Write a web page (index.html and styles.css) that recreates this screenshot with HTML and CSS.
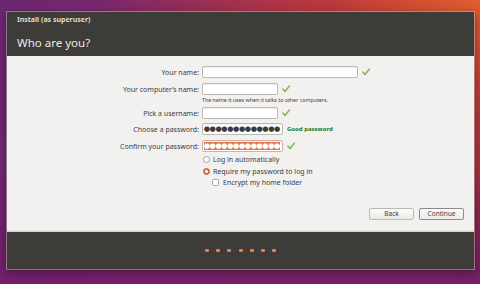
FILE: index.html
```html
<!DOCTYPE html>
<html lang="en">
<head>
<meta charset="utf-8">
<title>Install (as superuser)</title>
<link rel="stylesheet" href="styles.css">
</head>
<body>
<div class="window">
  <div class="titlebar">
    <div class="wm-title">Install (as superuser)</div>
    <h1 class="heading">Who are you?</h1>
  </div>
  <div class="content">
    <div class="form">
      <div class="row">
        <label class="label">Your name:</label>
        <div class="field field-long"></div>
        <svg class="check" viewBox="0 0 8 8"><path d="M1 4.2 L3 6.6 L7.2 1.2"/></svg>
      </div>
      <div class="row row-tight">
        <label class="label">Your computer’s name:</label>
        <div class="field field-short"></div>
        <svg class="check" viewBox="0 0 8 8"><path d="M1 4.2 L3 6.6 L7.2 1.2"/></svg>
      </div>
      <div class="hint">The name it uses when it talks to other computers.</div>
      <div class="row row-small-gap">
        <label class="label">Pick a username:</label>
        <div class="field field-short"></div>
        <svg class="check" viewBox="0 0 8 8"><path d="M1 4.2 L3 6.6 L7.2 1.2"/></svg>
      </div>
      <div class="row">
        <label class="label">Choose a password:</label>
        <div class="field field-pass"><span class="dots">●●●●●●●●●●●●●</span></div>
        <span class="strength">Good password</span>
      </div>
      <div class="row row-last">
        <label class="label">Confirm your password:</label>
        <div class="field field-pass field-selected"><span class="dots dots-selected">●●●●●●●●●●●●●</span></div>
        <svg class="check" viewBox="0 0 8 8"><path d="M1 4.2 L3 6.6 L7.2 1.2"/></svg>
      </div>
      <div class="option">
        <span class="radio"></span><span class="option-text">Log in automatically</span>
      </div>
      <div class="option">
        <span class="radio radio-on"></span><span class="option-text">Require my password to log in</span>
      </div>
      <div class="option option-sub">
        <span class="checkbox"></span><span class="option-text">Encrypt my home folder</span>
      </div>
    </div>
    <div class="buttons">
      <button class="btn">Back</button>
      <button class="btn btn-default">Continue</button>
    </div>
  </div>
  <div class="footer">
    <span class="step"></span><span class="step"></span><span class="step"></span><span class="step"></span><span class="step"></span><span class="step"></span><span class="step"></span>
  </div>
</div>
</body>
</html>
```
FILE: styles.css
```css
* { box-sizing: border-box; }
html, body { margin: 0; padding: 0; }
body {
  width: 480px;
  height: 284px;
  overflow: hidden;
  font-family: "Noto Sans", "Open Sans", sans-serif;
  background:
    linear-gradient(to bottom, rgba(110,30,100,0) 60%, rgba(112,30,104,0.95) 100%),
    radial-gradient(ellipse 380px 250px at 100% 0%, rgba(228,96,44,0.95) 0%, rgba(196,60,52,0.75) 40%, rgba(150,35,70,0) 100%),
    linear-gradient(100deg, #6c2672 0%, #842866 40%, #a22e4e 70%, #93253a 100%);
  padding: 12px 0 0 7px;
}
.window {
  width: 467px;
  height: 257px;
  display: flex;
  flex-direction: column;
  box-shadow: 0 0 0 1px rgba(200,190,190,0.55), 0 2px 8px rgba(0,0,0,0.45);
}
.titlebar {
  height: 44px;
  background: #3d3c38;
  padding: 0 0 0 10px;
  color: #dcd9d2;
  display: flex;
  flex-direction: column;
}
.wm-title {
  font-size: 7px;
  font-weight: bold;
  line-height: 10px;
  color: #dedbd4;
  display: flex;
  align-items: center;
  height: 12px;
  padding-top: 3px;
}
.heading {
  margin: 0;
  font-size: 11.5px;
  font-weight: normal;
  line-height: 16px;
  margin-top: 11px;
  color: #ecebe6;
}
.content {
  height: 175px;
  background: #f2f1f0;
  padding: 10px 10px 10px 0;
  display: flex;
  flex-direction: column;
  border-bottom: 1px solid #e6e4e0;
}
.form { display: flex; flex-direction: column; }
.row {
  display: flex;
  align-items: center;
  height: 12px;
  margin-bottom: 5px;
}
.row-tight { margin-bottom: 0; }
.row-small-gap { margin-bottom: 4px; }
.row-last { margin-bottom: 2px; }
.label {
  width: 192px;
  flex: none;
  text-align: right;
  font-size: 7px;
  color: #3c3c3c;
  margin-right: 3px;
  white-space: nowrap;
}
.field {
  height: 12px;
  background: #fff;
  border: 1px solid #bdb8b2;
  border-radius: 2px;
  box-shadow: inset 0 1px 1px rgba(0,0,0,0.06);
  flex: none;
  overflow: hidden;
}
.field-long { width: 156px; }
.field-short { width: 76px; }
.field-pass {
  width: 81px;
  display: flex;
  justify-content: flex-end;
  align-items: center;
  padding: 0 2px;
}
.field-selected { border-color: #c8b4a8; }
.dots {
  font-family: "DejaVu Sans", sans-serif;
  font-size: 7.2px;
  line-height: 8px;
  letter-spacing: -0.4px;
  color: #3a3a3a;
  white-space: nowrap;
}
.dots-selected {
  background: #e9764b;
  color: #fff;
}
.check {
  width: 8px;
  height: 8px;
  margin-left: 4px;
  flex: none;
}
.check path {
  fill: none;
  stroke: #86bb50;
  stroke-width: 1.6;
  stroke-linecap: round;
  stroke-linejoin: round;
}
.strength {
  margin-left: 4px;
  font-size: 6px;
  font-weight: bold;
  color: #217a21;
  white-space: nowrap;
}
.hint {
  height: 12px;
  line-height: 10px;
  padding-left: 195px;
  font-size: 5.3px;
  color: #3c3c3c;
  white-space: nowrap;
}
.option {
  display: flex;
  align-items: center;
  height: 11.5px;
  padding-left: 196px;
}
.option-sub { padding-left: 205px; }
.option-text {
  font-size: 7px;
  color: #3c3c3c;
  margin-left: 3px;
  white-space: nowrap;
}
.option-sub .option-text { margin-left: 4px; }
.radio {
  width: 7px;
  height: 7px;
  border-radius: 50%;
  border: 1px solid #a7a29c;
  background: #fff;
  flex: none;
}
.radio-on {
  border-color: #c85a2c;
  background: radial-gradient(circle, #fff 0 1.2px, #e3673a 1.6px);
}
.checkbox {
  width: 7px;
  height: 7px;
  border-radius: 1.5px;
  border: 1px solid #a7a29c;
  background: #fff;
  flex: none;
}
.buttons {
  margin-top: auto;
  display: flex;
  justify-content: flex-end;
  gap: 5px;
}
.btn {
  width: 45px;
  height: 12px;
  padding: 0;
  font-family: "Noto Sans", "Open Sans", sans-serif;
  font-size: 6.5px;
  line-height: 10px;
  color: #3c3c3c;
  background: linear-gradient(#fbfbfb, #ebeae8);
  border: 1px solid #bcb8b2;
  border-radius: 2px;
}
.btn-default { border-color: #8f8b86; }
.footer {
  flex: 1;
  background: #3d3c38;
  border-top: 1px solid #d8d5d0;
  display: flex;
  justify-content: center;
  align-items: center;
  gap: 7.3px;
}
.step {
  width: 4px;
  height: 3.5px;
  border-radius: 1px;
  background: #ea7d4a;
}
```
